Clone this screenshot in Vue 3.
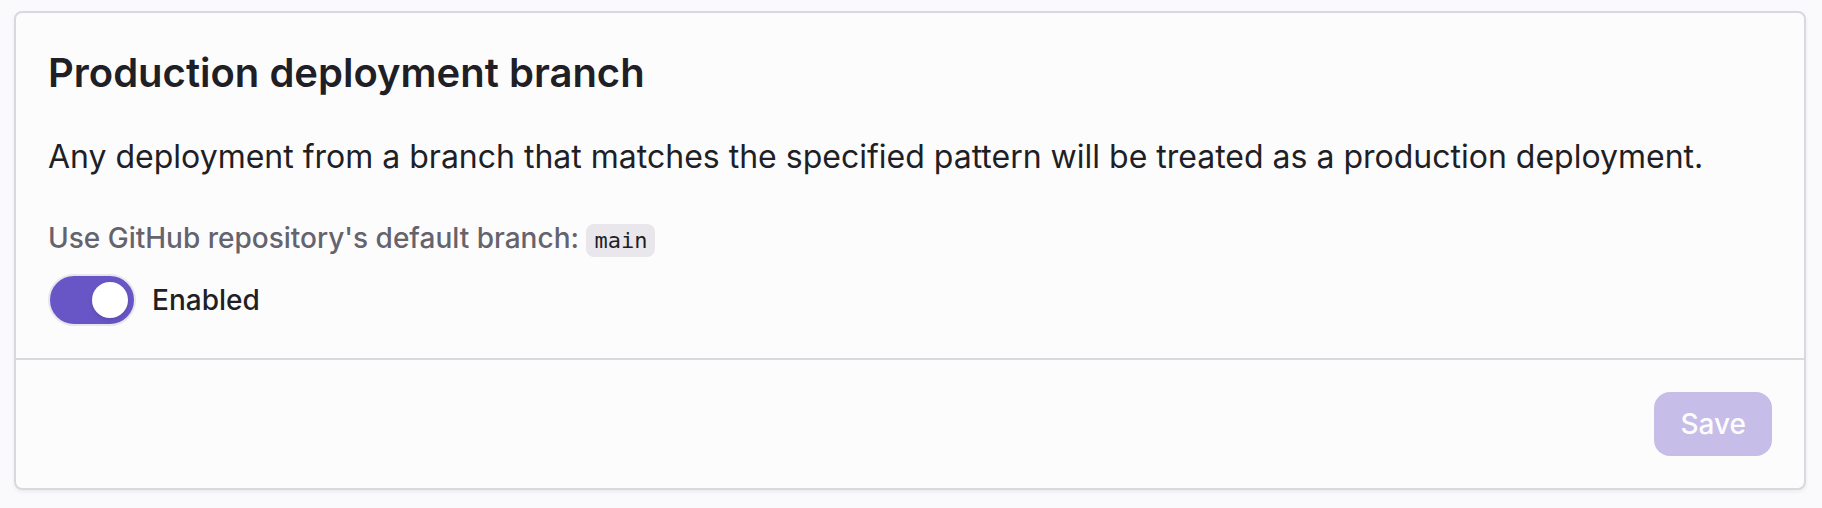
<template>
  <main class="page">
    <form class="card" @submit.prevent="save">
      <div class="card-body">
        <h2 class="title">Production deployment branch</h2>
        <p class="description">
          Any deployment from a branch that matches the specified pattern will be treated as a production deployment.
        </p>
        <div class="field">
          <label class="field-label" for="default-branch">
            Use GitHub repository's default branch: <code class="branch">{{ branch }}</code>
          </label>
          <label class="toggle">
            <input id="default-branch" v-model="enabled" class="switch" type="checkbox" role="switch">
            <span>{{ enabled ? 'Enabled' : 'Disabled' }}</span>
          </label>
        </div>
      </div>
      <div class="card-footer">
        <button class="save" type="submit" :disabled="!changed">Save</button>
      </div>
    </form>
  </main>
</template>

<script setup>
import { computed, ref } from 'vue'

const branch = 'main'
const saved = ref(true)
const enabled = ref(true)

const changed = computed(() => enabled.value !== saved.value)

const save = () => {
  saved.value = enabled.value
}
</script>

<style>
body {
  background: #fafafc;
}
</style>

<style scoped>
.page {
  padding: 11px 16px 18px 14px;
  font-family: Inter, "Liberation Sans", sans-serif;
  color: #211f26;
}

.card {
  border: 2px solid #d9d8df;
  border-radius: 8px;
  background: #fdfcfd;
  box-shadow: 0 2px 4px rgba(0, 0, 0, 0.06);
}

.card-body {
  padding: 32px;
}

.title {
  margin: 0 0 32px;
  font-size: 40px;
  font-weight: 600;
  line-height: 56px;
}

.description {
  margin: 0 0 32px;
  font-size: 32px;
  line-height: 48px;
}

.field {
  display: flex;
  flex-direction: column;
  align-items: flex-start;
  gap: 11px;
}

.field-label {
  color: #65636d;
  font-size: 28px;
  font-weight: 500;
  line-height: 50px;
}

.branch {
  padding: 4px 8px;
  border-radius: 8px;
  background: #eae7ec;
  color: #211f26;
  font-family: "DejaVu Sans Mono", monospace;
  font-size: 22px;
  font-weight: 400;
  line-height: 1;
}

.toggle {
  display: flex;
  align-items: center;
  gap: 16px;
  font-size: 28px;
  font-weight: 500;
  line-height: 48px;
}

.switch {
  appearance: none;
  display: flex;
  align-items: center;
  box-sizing: border-box;
  width: 88px;
  height: 52px;
  margin: 0;
  padding: 6px;
  border: 2px solid #e8e6eb;
  border-radius: 26px;
  background: #bcbac7;
  cursor: pointer;
}

.switch::before {
  content: "";
  width: 36px;
  height: 36px;
  border-radius: 50%;
  background: #fff;
  box-shadow: 0 2px 4px rgba(0, 0, 0, 0.12);
}

.switch:checked {
  justify-content: flex-end;
  background: #6956c6;
}

.card-footer {
  display: flex;
  justify-content: flex-end;
  padding: 32px;
  border-top: 2px solid #d9d8df;
}

.save {
  padding: 0 26px;
  border: 0;
  border-radius: 16px;
  background: #6956c6;
  color: #fdfcfd;
  font-family: inherit;
  font-size: 28px;
  font-weight: 500;
  line-height: 64px;
}

.save:disabled {
  background: #c7bde9;
}
</style>
